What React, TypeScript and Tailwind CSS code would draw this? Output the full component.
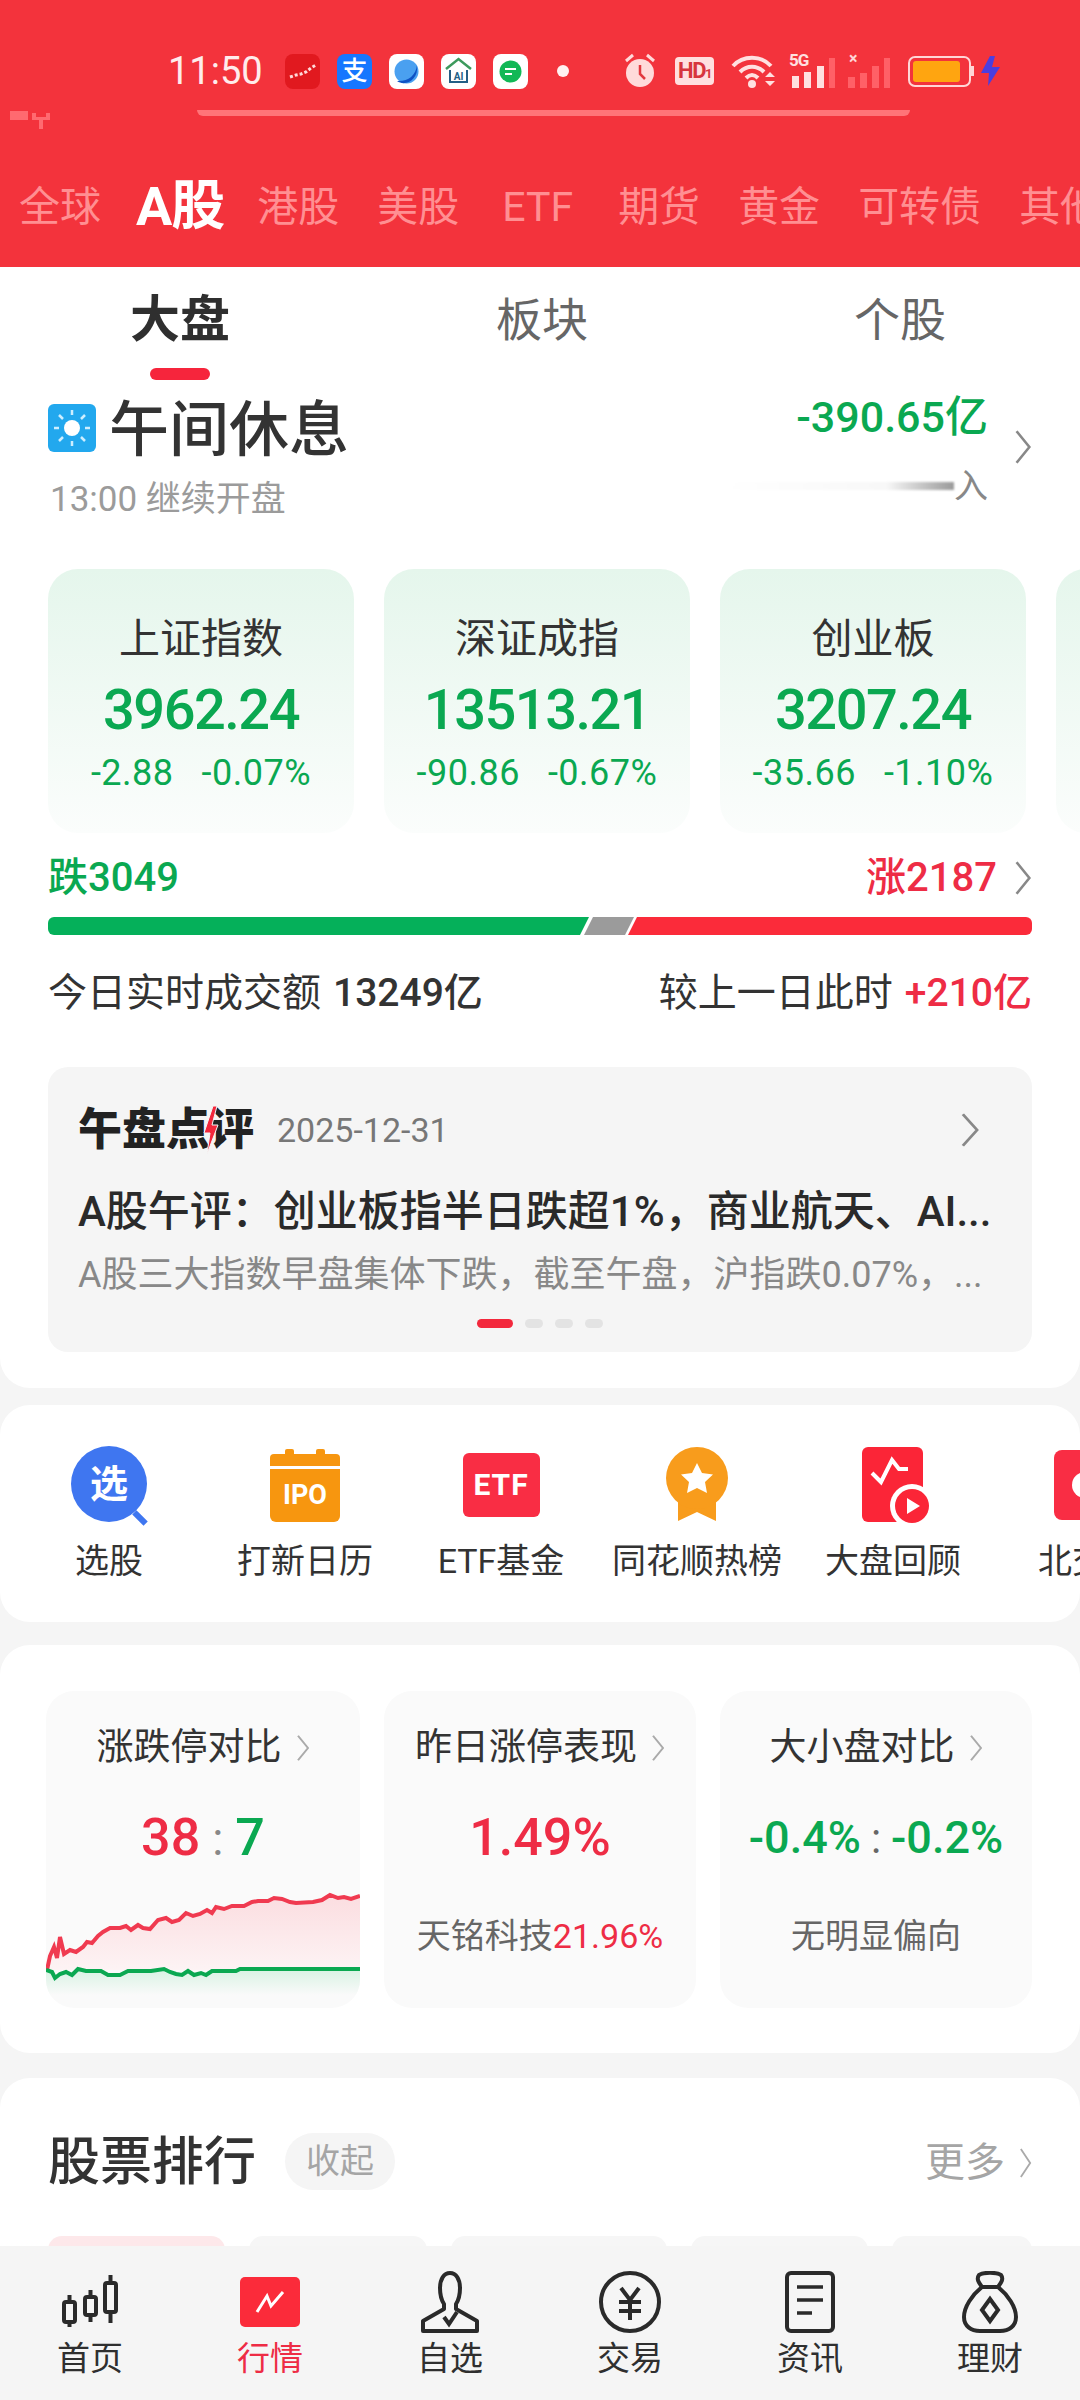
import React from 'react';

const GREEN = 'text-[#0aa851]';
const RED = 'text-[#ee2c45]';

const Chevron = ({ className = '' }: { className?: string }) => (
  <svg viewBox="0 0 14 32" className={`shrink-0 ${className}`} fill="none" stroke="currentColor" strokeWidth="2" preserveAspectRatio="none">
    <polyline points="2,2 12,16 2,30" />
  </svg>
);

const StatusBar = () => (
  <div className="flex items-center h-[36px] pl-[168px]">
    <span className="w-[94px] text-[38px] leading-[36px] text-[#ffecec]">11:50</span>
    <div className="ml-[23px] flex gap-[17px]">
      <svg viewBox="0 0 35 35" className="w-[35px] h-[35px]">
        <rect width="35" height="35" rx="8" fill="#e1191f" />
        <polyline points="5,23 11,21 16,20 21,18 26,14 31,11" fill="none" stroke="#ffd9d9" strokeWidth="3" strokeDasharray="3 2" />
      </svg>
      <div className="w-[35px] h-[35px] rounded-[8px] bg-[#1677ff] flex items-center justify-center text-white text-[26px] leading-none font-medium">支</div>
      <svg viewBox="0 0 35 35" className="w-[35px] h-[35px]">
        <rect width="35" height="35" rx="8" fill="#fff" />
        <circle cx="17.5" cy="17.5" r="12" fill="#4aa0f0" />
        <path d="M28 11 C27 22 18 28 8 27 C16 33 30 26 28 11Z" fill="#0f52c4" />
      </svg>
      <svg viewBox="0 0 35 35" className="w-[35px] h-[35px]">
        <rect width="35" height="35" rx="8" fill="#fff" />
        <path d="M5 15 L17.5 5 L30 15" fill="none" stroke="#3d9a5c" strokeWidth="2.5" />
        <path d="M9 16 V28 H26 V16" fill="none" stroke="#245f86" strokeWidth="2" />
        <text x="17.5" y="26" textAnchor="middle" fontSize="10" fill="#245f86" fontWeight="700">AI</text>
      </svg>
      <svg viewBox="0 0 35 35" className="w-[35px] h-[35px]">
        <rect width="35" height="35" rx="8" fill="#fff" />
        <circle cx="17.5" cy="17.5" r="11" fill="#12b856" />
        <path d="M12 15 H23 M12 20 H19" stroke="#fff" strokeWidth="2" />
      </svg>
    </div>
    <div className="ml-[29px] w-[12px] h-[12px] rounded-full bg-[#fff1f1]" />
    <div className="ml-[54px] flex items-center">
      <svg viewBox="0 0 34 36" className="w-[34px] h-[36px]">
        <circle cx="17" cy="20" r="14" fill="#ffdada" />
        <path d="M17 12 V21 L22 26" fill="none" stroke="#e2383f" strokeWidth="2.5" />
        <path d="M3 8 L10 2 M31 8 L24 2" stroke="#ffdada" strokeWidth="3" />
      </svg>
      <div className="ml-[18px] w-[39px] h-[28px] rounded-[4px] bg-[#ffdfdf] text-[#d7353d] text-[22px] leading-[28px] text-center font-bold tracking-[-1.5px]">HD<span className="text-[13px]">1</span></div>
      <svg viewBox="0 0 46 34" className="ml-[17px] w-[46px] h-[34px]">
        <path d="M2 12 C12 1 30 1 40 12 M9 18 C16 11 26 11 33 18 M15 24 C19 20 23 20 27 24" fill="none" stroke="#ffe0e0" strokeWidth="4" />
        <circle cx="21" cy="30" r="4" fill="#ffe0e0" />
        <path d="M34 23 L39 18 L44 23Z M34 27 H44 L39 32Z" fill="#ffe0e0" />
      </svg>
      <div className="ml-[12px] relative w-[48px] h-[34px]">
        <span className="absolute left-0 top-[-2px] text-[17px] leading-[17px] font-bold text-[#ffe0e0] tracking-[-1px]">5G</span>
        <div className="absolute inset-0 flex items-end gap-[5px] pl-[3px]">
          <div className="w-[7px] h-[12px] bg-[#ffe0e0]" />
          <div className="w-[7px] h-[16px] bg-[#ffe0e0]" />
          <div className="w-[7px] h-[22px] bg-[#ffe0e0] ml-[1px]" />
          <div className="w-[6px] h-[30px] bg-[#ff6067]" />
        </div>
      </div>
      <div className="ml-[11px] relative w-[46px] h-[34px]">
        <span className="absolute left-[1px] top-[-3px] text-[16px] leading-[16px] font-bold text-[#ffd6d6]">×</span>
        <div className="absolute inset-0 flex items-end gap-[5px]">
          <div className="w-[7px] h-[11px] bg-[#ff6067]" />
          <div className="w-[7px] h-[15px] bg-[#ff6067]" />
          <div className="w-[7px] h-[22px] bg-[#ff6067]" />
          <div className="w-[6px] h-[30px] bg-[#ff6067]" />
        </div>
      </div>
      <div className="ml-[14px] flex items-center">
        <div className="w-[63px] h-[31px] rounded-[7px] border-[2px] border-[#ffd6d6] p-[3px]">
          <div className="w-[47px] h-full rounded-[3px] bg-[#ffa510]" />
        </div>
        <div className="w-[3px] h-[10px] bg-[#ffd6d6]" />
      </div>
      <svg viewBox="0 0 20 30" className="ml-[7px] w-[20px] h-[30px]">
        <path d="M9 0 L0 17 H8 L7 30 L19 11 H11 L14 0Z" fill="#4b3ee0" />
      </svg>
    </div>
  </div>
);

const MarketTabs = () => (
  <div className="mt-[61px] flex items-center gap-[38px] pl-[19px] whitespace-nowrap text-[41px] leading-[60px] text-[#ff8f92]">
    <span>全球</span>
    <span className="text-[#ffffff] text-[54px] font-bold -ml-[3px] tracking-[-1px]">A股</span>
    <span className="-ml-[5px]">港股</span>
    <span>美股</span>
    <span className="ml-[5px] mr-[7px]">ETF</span>
    <span>期货</span>
    <span>黄金</span>
    <span>可转债</span>
    <span>其他</span>
  </div>
);

const IndexCard = ({ name, value, change, pct }: { name: string; value: string; change: string; pct: string }) => (
  <div className="w-[306px] h-[264px] shrink-0 rounded-[30px] bg-gradient-to-b from-[#e5f6ec] to-[#fbfdfc] flex flex-col items-center pt-[48px]">
    <div className="text-[41px] leading-[44px] text-[#333333]">{name}</div>
    <div className={`mt-[19px] text-[56px] leading-[60px] font-medium tracking-[-1.5px] ${GREEN}`}>{value}</div>
    <div className={`mt-[15px] text-[36px] leading-[36px] tracking-[0.5px] flex gap-[28px] ${GREEN}`}>
      <span>{change}</span>
      <span>{pct}</span>
    </div>
  </div>
);

const MarketSection = () => (
  <section className="bg-white rounded-b-[30px] pb-[36px]">
    <div className="grid grid-cols-3 h-[113px]">
      <div className="flex flex-col items-center pt-[27px]">
        <span className="text-[50px] leading-[52px] font-bold text-[#2f2f2f]">大盘</span>
        <div className="mt-[22px] w-[60px] h-[12px] rounded-full bg-[#f6253c]" />
      </div>
      <div className="flex flex-col items-center pt-[27px]">
        <span className="text-[46px] leading-[52px] text-[#666666] ml-[4px]">板块</span>
      </div>
      <div className="flex flex-col items-center pt-[27px]">
        <span className="text-[46px] leading-[52px] text-[#666666]">个股</span>
      </div>
    </div>

    <div className="mt-[18px] pl-[48px] pr-[48px] flex justify-between h-[122px]">
      <div>
        <div className="flex items-center h-[60px]">
          <svg viewBox="0 0 48 48" className="w-[48px] h-[48px]">
            <rect width="48" height="48" rx="6" fill="#22a8ee" />
            <circle cx="24" cy="24" r="8" fill="#fff" />
            <path d="M24 6 V11 M24 37 V42 M6 24 H11 M37 24 H42 M11 11 L15 15 M33 33 L37 37 M37 11 L33 15 M15 33 L11 37" stroke="#cdeeff" strokeWidth="2.5" />
          </svg>
          <span className="ml-[13px] pt-[6px] text-[60px] leading-[60px] font-medium text-[#333333]">午间休息</span>
        </div>
        <div className="mt-[22px] ml-[2px] text-[35px] leading-[40px] text-[#9b9b9b]">13:00 继续开盘</div>
      </div>
      <div className="flex items-center h-[122px] -mt-[12px]">
        <div className="flex flex-col items-end mr-[26px] w-[260px]">
          <span className={`text-[43px] leading-[48px] font-medium ${GREEN}`}>-390.65亿</span>
          <div className="mt-[30px] flex items-center">
            <div className="w-[225px] h-[8px] bg-gradient-to-r from-[#ffffff] via-[#f8f8f8] via-70% to-[#9a9a9a] blur-[1px]" />
            <span className="text-[34px] leading-[30px] text-[#888888]">入</span>
          </div>
        </div>
        <Chevron className="w-[18px] h-[36px] text-[#888888]" />
      </div>
    </div>

    <div className="mt-[49px] pl-[48px] flex gap-[30px] overflow-hidden">
      <IndexCard name="上证指数" value="3962.24" change="-2.88" pct="-0.07%" />
      <IndexCard name="深证成指" value="13513.21" change="-90.86" pct="-0.67%" />
      <IndexCard name="创业板" value="3207.24" change="-35.66" pct="-1.10%" />
      <div className="w-[306px] h-[264px] shrink-0 rounded-[30px] bg-gradient-to-b from-[#e5f6ec] to-[#fbfdfc]" />
    </div>

    <div className="px-[48px]">
      <div className="mt-[21px] pt-[3px] flex justify-between items-center h-[44px] text-[40px] leading-[44px] font-medium">
        <span className={GREEN}>跌3049</span>
        <span className={`flex items-center ${RED}`}>
          涨2187
          <Chevron className="ml-[17px] w-[18px] h-[36px] text-[#888888]" />
        </span>
      </div>

      <div className="mt-[19px] h-[18px] flex rounded-[6px] overflow-hidden">
        <div className="w-[541px] bg-[#05b05a] [clip-path:polygon(0_0,100%_0,calc(100%-9px)_100%,0_100%)]" />
        <div className="w-[50px] -ml-[5px] bg-[#9b9b9b] [clip-path:polygon(9px_0,100%_0,calc(100%-9px)_100%,0_100%)]" />
        <div className="flex-1 -ml-[6px] bg-[#fb2b3a] [clip-path:polygon(9px_0,100%_0,100%_100%,0_100%)]" />
      </div>

      <div className="mt-[36px] flex justify-between h-[44px] text-[39px] leading-[44px] text-[#333333]">
        <span>今日实时成交额<span className="ml-[12px] font-medium">13249亿</span></span>
        <span>较上一日此时<span className={`ml-[12px] font-medium ${RED}`}>+210亿</span></span>
      </div>

      <div className="mt-[52px] h-[285px] rounded-[20px] bg-[#f5f5f5] pt-[38px] px-[30px]">
        <div className="flex items-center h-[50px]">
          <div className="relative w-[174px] text-[44px] leading-[50px] font-black text-[#222222] whitespace-nowrap">
            午盘点评
            <svg viewBox="0 0 16 50" className="absolute left-[125px] top-0 w-[16px] h-[50px]">
              <path d="M10 1 L1 28 H7 L4 49 L15 20 H9 L14 1Z" fill="#f3283c" stroke="#f5f5f5" strokeWidth="1" />
            </svg>
          </div>
          <span className="ml-[25px] text-[34px] leading-[50px] text-[#777777]">2025-12-31</span>
          <Chevron className="ml-auto mr-[22px] w-[20px] h-[36px] text-[#888888]" />
        </div>
        <div className="mt-[33px] text-[42px] leading-[48px] font-medium text-[#2a2a2a] whitespace-nowrap">A股午评：创业板指半日跌超1%，商业航天、AI...</div>
        <div className="mt-[17px] text-[36px] leading-[44px] text-[#888888] whitespace-nowrap">A股三大指数早盘集体下跌，截至午盘，沪指跌0.07%，...</div>
        <div className="mt-[22px] flex justify-center gap-[12px]">
          <div className="w-[36px] h-[9px] rounded-full bg-[#f3283c]" />
          <div className="w-[18px] h-[9px] rounded-full bg-[#e3e3e3]" />
          <div className="w-[18px] h-[9px] rounded-full bg-[#e3e3e3]" />
          <div className="w-[18px] h-[9px] rounded-full bg-[#e3e3e3]" />
        </div>
      </div>
    </div>
  </section>
);

const Shortcut = ({ label, children }: { label: string; children: React.ReactNode }) => (
  <div className="w-[196px] shrink-0 flex flex-col items-center">
    <div className="h-[80px] flex items-center justify-center">{children}</div>
    <div className="mt-[16px] text-[34px] leading-[40px] text-[#333333] whitespace-nowrap">{label}</div>
  </div>
);

const ShortcutSection = () => (
  <section className="mt-[17px] h-[217px] bg-white rounded-[30px] pt-[40px] pl-[11px] flex overflow-hidden">
    <Shortcut label="选股">
      <div className="relative w-[76px] h-[78px]">
        <div className="w-[76px] h-[76px] rounded-full bg-[#3f76f0] flex items-center justify-center text-white text-[38px] leading-none font-bold">选</div>
        <div className="absolute right-[-1px] bottom-[3px] w-[16px] h-[6px] bg-[#3f76f0] rotate-45" />
      </div>
    </Shortcut>
    <Shortcut label="打新日历">
      <div className="w-[70px] h-[70px] mt-[4px] flex flex-col">
        <div className="relative h-[12px] mt-[2px] rounded-t-[4px] bg-[#f7960f]">
          <div className="absolute left-[15px] -top-[5px] w-[9px] h-[6px] rounded-t-[2px] bg-[#f7960f]" />
          <div className="absolute right-[15px] -top-[5px] w-[9px] h-[6px] rounded-t-[2px] bg-[#f7960f]" />
        </div>
        <div className="mt-[3px] flex-1 rounded-b-[6px] bg-[#f7960f] text-white text-[27px] leading-[52px] text-center font-bold">IPO</div>
      </div>
    </Shortcut>
    <Shortcut label="ETF基金">
      <div className="w-[77px] h-[64px] rounded-[6px] bg-[#f92d44] text-white text-[30px] leading-[64px] text-center font-bold tracking-[1px]">ETF</div>
    </Shortcut>
    <Shortcut label="同花顺热榜">
      <svg viewBox="0 0 62 76" className="w-[62px] h-[76px]">
        <path d="M12 45 V74 L31 65 L50 74 V45Z" fill="#f89c1c" />
        <circle cx="31" cy="31" r="31" fill="#f89c1c" />
        <path d="M31 16 L36 26 L47 27.5 L39 35 L41 46 L31 41 L21 46 L23 35 L15 27.5 L26 26Z" fill="#fff" />
      </svg>
    </Shortcut>
    <Shortcut label="大盘回顾">
      <svg viewBox="0 0 72 78" className="w-[72px] h-[78px] ml-[10px]">
        <rect x="0" y="1" width="61" height="75" rx="6" fill="#fb2537" />
        <polyline points="10,27 19,36 30,14 37,23 46,23" fill="none" stroke="#fff" strokeWidth="4" />
        <circle cx="50" cy="60" r="22" fill="#fff" />
        <circle cx="50" cy="60" r="17" fill="#fb2537" />
        <path d="M45 52 L58 60 L45 68Z" fill="#fff" />
      </svg>
    </Shortcut>
    <Shortcut label="北交所">
      <div className="relative w-[70px] h-[70px] rounded-[8px] bg-[#f92d44] overflow-hidden">
        <div className="absolute left-[18px] top-[22px] w-[34px] h-[26px] rounded-full bg-white" />
      </div>
    </Shortcut>
  </section>
);

const redLine = '1,80 4,66 8,57 11,68 14,47 18,64 24,60 30,62 37,57 41,52 46,53 52,46 57,42 64,38 74,38 80,36 85,40 92,35 97,38 104,39 112,30 120,28 126,32 133,30 140,23 147,26 154,24 161,20 166,23 170,17 178,19 186,16 198,16 206,12 212,11 222,11 228,8 236,9 244,12 250,13 267,12 276,10 284,5 292,8 298,7 305,9 314,6';
const greenLine = '0,80 6,82 9,88 14,84 20,82 26,85 32,79 40,81 55,81 62,85 74,85 82,81 105,81 118,79 124,82 130,84 136,85 142,81 148,85 155,83 160,85 166,81 190,81 194,79 314,79';

const StatCard = ({ title, children, sub, wide }: { title: string; children: React.ReactNode; sub?: React.ReactNode; wide?: boolean }) => (
  <div className={`relative h-[317px] rounded-[28px] bg-[#fafafa] overflow-hidden pt-[35px] flex flex-col items-center ${wide ? 'w-[314px]' : 'w-[312px]'}`}>
    <div className="flex items-center h-[44px] text-[37px] leading-[44px] text-[#333333] whitespace-nowrap">
      {title}
      <Chevron className="ml-[14px] w-[14px] h-[28px] text-[#aaaaaa]" />
    </div>
    <div className="mt-[38px] h-[60px] leading-[60px] whitespace-nowrap">{children}</div>
    {sub && <div className="mt-[46px] h-[44px] text-[34px] leading-[44px] text-[#666666] whitespace-nowrap">{sub}</div>}
  </div>
);

const StatsSection = () => (
  <section className="mt-[23px] h-[408px] bg-white rounded-[30px] pt-[46px] pl-[46px] flex gap-[24px]">
    <StatCard
      wide
      title="涨跌停对比"
    >
      <span className={`text-[52px] font-medium ${RED}`}>38</span>
      <span className="mx-[12px] text-[46px] text-[#888888]">:</span>
      <span className={`text-[52px] font-medium ${GREEN}`}>7</span>
      <svg viewBox="0 0 314 115" className="absolute left-0 top-[199px] w-[314px] h-[115px]">
        <defs>
          <linearGradient id="redFill" x1="0" y1="0" x2="0" y2="1">
            <stop offset="0" stopColor="#fbdde0" />
            <stop offset="1" stopColor="#fdf3f4" />
          </linearGradient>
          <linearGradient id="greenFill" x1="0" y1="0" x2="0" y2="1">
            <stop offset="0" stopColor="#d8f2e3" />
            <stop offset="1" stopColor="#fafafa" />
          </linearGradient>
        </defs>
        <polygon points={`${redLine} 314,80 1,80`} fill="url(#redFill)" />
        <polygon points={`${greenLine} 314,105 0,105`} fill="url(#greenFill)" />
        <polyline points={redLine} fill="none" stroke="#f03a50" strokeWidth="4" />
        <polyline points={greenLine} fill="none" stroke="#0aa851" strokeWidth="4" />
      </svg>
    </StatCard>
    <StatCard
      title="昨日涨停表现"
      sub={<>天铭科技<span className={RED}>21.96%</span></>}
    >
      <span className={`text-[52px] font-medium ${RED}`}>1.49%</span>
    </StatCard>
    <StatCard title="大小盘对比" sub="无明显偏向">
      <span className={`text-[45px] font-medium ${GREEN}`}>-0.4%</span>
      <span className="mx-[10px] text-[42px] text-[#666666]">:</span>
      <span className={`text-[45px] font-medium ${GREEN}`}>-0.2%</span>
    </StatCard>
  </section>
);

const RankSection = () => (
  <section className="mt-[25px] bg-white rounded-t-[30px] pt-[55px] pl-[48px] pr-[48px]">
    <div className="flex items-center h-[60px]">
      <span className="text-[52px] leading-[60px] font-medium text-[#333333]">股票排行</span>
      <span className="ml-[29px] -mt-[4px] w-[110px] h-[57px] rounded-full bg-[#f5f5f5] text-[34px] leading-[57px] text-center text-[#a5a5a5]">收起</span>
      <span className="ml-auto text-[40px] leading-[60px] text-[#a5a5a5]">更多</span>
      <Chevron className="ml-[14px] w-[13px] h-[32px] text-[#aaaaaa]" />
    </div>
    <div className="mt-[43px] flex gap-[24px] h-[60px]">
      <div className="w-[178px] rounded-t-[14px] bg-[#fde8ea]" />
      <div className="w-[178px] rounded-t-[14px] bg-[#f6f6f6]" />
      <div className="w-[217px] rounded-t-[14px] bg-[#f6f6f6]" />
      <div className="w-[178px] rounded-t-[14px] bg-[#f6f6f6]" />
      <div className="w-[140px] rounded-t-[14px] bg-[#f6f6f6]" />
    </div>
  </section>
);

const NavItem = ({ label, active, children }: { label: string; active?: boolean; children: React.ReactNode }) => (
  <div className="flex flex-col items-center">
    <div className="h-[62px] flex items-center justify-center">{children}</div>
    <span className={`mt-[6px] text-[33px] leading-[40px] ${active ? RED : 'text-[#2f2f2f]'}`}>{label}</span>
  </div>
);

const BottomNav = () => (
  <nav className="h-[154px] shrink-0 bg-[#f5f5f5] grid grid-cols-6 pt-[25px]">
    <NavItem label="首页">
      <svg viewBox="0 0 60 62" className="w-[60px] h-[62px]" fill="none" stroke="#2a2a2a" strokeWidth="4">
        <rect x="4" y="31" width="11" height="20" rx="2" />
        <path d="M9.5 24 V31 M9.5 51 V56" />
        <rect x="25" y="26" width="11" height="18" rx="2" />
        <path d="M30.5 19 V26 M30.5 44 V51" />
        <rect x="45" y="12" width="11" height="29" rx="2" />
        <path d="M50.5 4 V12 M50.5 41 V52" />
      </svg>
    </NavItem>
    <NavItem label="行情" active>
      <div className="w-[60px] h-[50px] rounded-[5px] bg-[#fb2b3a] flex items-center justify-center">
        <svg viewBox="0 0 30 24" className="w-[30px] h-[24px]" fill="none" stroke="#ffffff" strokeWidth="3">
          <polyline points="2,22 12,6 16,16 28,2" />
        </svg>
      </div>
    </NavItem>
    <NavItem label="自选">
      <svg viewBox="0 0 60 62" className="w-[60px] h-[62px]" fill="none" stroke="#2a2a2a" strokeWidth="4">
        <path d="M30 2 C24 2 20 8 20 17 C20 25 22 30 24 33 L24 38 L3 50 L3 60 L57 60 L57 50 L36 38 L36 33 C38 30 40 25 40 17 C40 8 36 2 30 2 Z" strokeLinejoin="round" />
        <polyline points="24,46 29,53 37,41" />
      </svg>
    </NavItem>
    <NavItem label="交易">
      <svg viewBox="0 0 62 62" className="w-[62px] h-[62px]" fill="none" stroke="#2a2a2a" strokeWidth="4">
        <circle cx="31" cy="31" r="29" />
        <path d="M22 17 L31 29 L40 17 M20 31 H42 M20 40 H42 M31 29 V49" strokeWidth="4" />
      </svg>
    </NavItem>
    <NavItem label="资讯">
      <svg viewBox="0 0 50 62" className="w-[50px] h-[62px]" fill="none" stroke="#2a2a2a" strokeWidth="4">
        <rect x="2" y="2" width="46" height="58" rx="4" />
        <path d="M12 16 H38 M12 29 H38 M12 42 H27" strokeWidth="3.5" />
      </svg>
    </NavItem>
    <NavItem label="理财">
      <svg viewBox="0 0 56 62" className="w-[56px] h-[62px]" fill="none" stroke="#2a2a2a" strokeWidth="4">
        <path d="M20 16 C17 12 14 8 17 4 C22 1 34 1 39 4 C42 8 39 12 36 16" />
        <path d="M20 16 H36 C46 24 54 36 54 46 C54 55 47 60 38 60 H18 C9 60 2 55 2 46 C2 36 10 24 20 16Z" />
        <path d="M28 28 L36 39 L28 50 L20 39Z" />
      </svg>
    </NavItem>
  </nav>
);

export default function App() {
  return (
    <div className="w-[1080px] h-[2400px] overflow-hidden flex flex-col bg-[#f5f5f5] font-[Roboto,'Noto_Sans_CJK_SC',sans-serif]">
      <header className="relative h-[267px] shrink-0 bg-[#f3333c] pt-[53px] overflow-hidden">
        <StatusBar />
        <div className="mx-[197px] mt-[21px] w-[713px] h-[6px] rounded-b-[8px] bg-[#ff7478]" />
        <svg viewBox="0 0 40 20" className="absolute left-[10px] top-[110px] w-[40px] h-[20px]">
          <path d="M0 1 H18 V10 H0Z M22 3 H26 V7 H36 V3 H40 V10 H33 V19 H29 V10 H22Z" fill="#ff6a70" />
        </svg>
        <MarketTabs />
      </header>
      <main className="flex-1 overflow-hidden">
        <MarketSection />
        <ShortcutSection />
        <StatsSection />
        <RankSection />
      </main>
      <BottomNav />
    </div>
  );
}
